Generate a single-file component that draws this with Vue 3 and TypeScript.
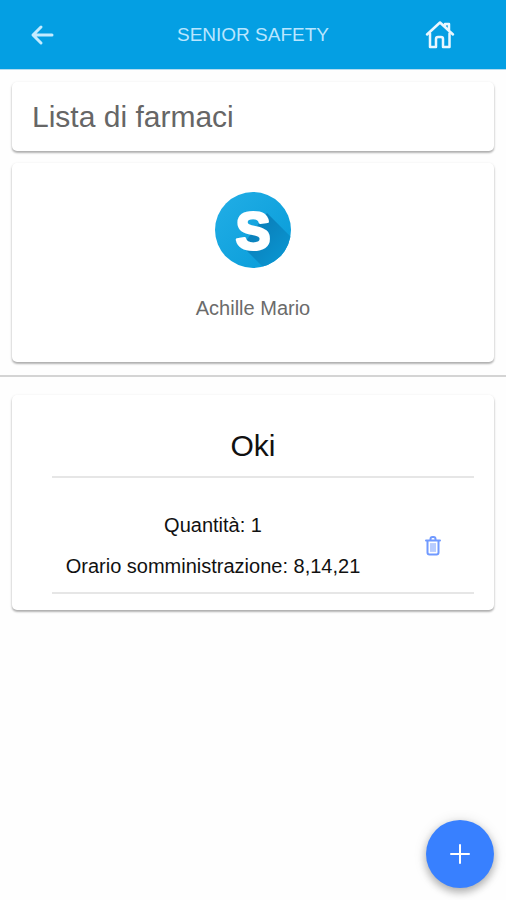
<script setup lang="ts">
interface Medicine {
  id: number
  name: string
  quantity: number
  hours: number[]
}

const patient = 'Achille Mario'
const medicines: Medicine[] = [{ id: 1, name: 'Oki', quantity: 1, hours: [8, 14, 21] }]
</script>

<template>
  <div class="page">
    <header class="toolbar">
      <button class="icon-button" type="button" aria-label="Indietro">
        <svg class="icon-back" viewBox="0 0 24 24" aria-hidden="true">
          <path d="M11 4 3 12l8 8M4 12h18" />
        </svg>
      </button>
      <h1 class="brand">SENIOR SAFETY</h1>
      <a class="icon-button" href="#" aria-label="Home">
        <svg class="icon-home" viewBox="0 0 30 30" aria-hidden="true">
          <path d="M5 13.500V27h6v-8q0-2 2-2h3q2 0 2 2v8h6.500V13.500" />
          <path d="M2 14.500 15 2.500l13 12M20 6.500V4h4v6.500" />
        </svg>
      </a>
    </header>

    <main>
      <section class="card title-card">
        <h2>Lista di farmaci</h2>
      </section>

      <section class="card profile">
        <svg class="logo" viewBox="0 0 78 78" aria-hidden="true">
          <defs>
            <linearGradient id="disc" x1="0" y1="0" x2="1" y2="1">
              <stop offset="0" stop-color="#22aee6" />
              <stop offset="1" stop-color="#079bd8" />
            </linearGradient>
            <linearGradient id="shade" x1="0" y1="0" x2="1" y2="1">
              <stop offset="0.300" stop-color="#0a82bd" />
              <stop offset="0.850" stop-color="#0a9ad6" />
            </linearGradient>
            <clipPath id="round"><circle cx="39" cy="39" r="38" /></clipPath>
          </defs>
          <circle cx="39" cy="39" r="38" fill="url(#disc)" />
          <path d="M53 22 85 54 65 85 50 77 28 55Z" fill="url(#shade)" clip-path="url(#round)" />
          <text x="39" y="58" text-anchor="middle">S</text>
        </svg>
        <p>{{ patient }}</p>
      </section>

      <hr class="divider" />

      <article v-for="item in medicines" :key="item.id" class="card medicine">
        <h3>{{ item.name }}</h3>
        <div class="details">
          <div class="dosage">
            <p>Quantità: {{ item.quantity }}</p>
            <p>Orario somministrazione: {{ item.hours.join(',') }}</p>
          </div>
          <button class="icon-button" type="button" :aria-label="`Elimina ${item.name}`">
            <svg class="icon-trash" viewBox="0 0 16 20" aria-hidden="true">
              <path class="bin" d="M1 4.500h14M5.500 4V3q0-2 2-2h1q2 0 2 2v1M2.500 5v11.500q0 2 2 2h7q2 0 2-2V5" />
              <path d="M6 7.500v8M8 7.500v8M10 7.500v8" />
            </svg>
          </button>
        </div>
      </article>
    </main>

    <button class="fab" type="button" aria-label="Aggiungi farmaco">
      <svg viewBox="0 0 20 20" aria-hidden="true"><path d="M10 1v18M1 10h18" /></svg>
    </button>
  </div>
</template>

<style>
body {
  margin: 0;
  background: #fefefe;
}
</style>

<style scoped>
.page {
  min-height: 100vh;
  font-family: "Liberation Sans", Arial, sans-serif;
  font-size: 20px;
  line-height: 24px;
  color: #111;
}

h1,
h2,
h3,
p {
  margin: 0;
  font-weight: 400;
}

svg {
  display: block;
  fill: none;
  stroke: currentColor;
  stroke-linecap: round;
  stroke-linejoin: round;
}

.icon-button {
  display: flex;
  align-items: center;
  justify-content: center;
  padding: 0;
  border: 0;
  background: none;
  color: inherit;
  cursor: pointer;
}

.toolbar {
  display: grid;
  grid-template-columns: 84px 1fr 84px;
  align-items: center;
  height: 69px;
  padding-right: 24px;
  background: #049fe3;
  color: #e9f7ff;
  border-bottom: 1px solid #b5dcef;
}

.toolbar .icon-button {
  height: 48px;
}

.brand {
  padding-left: 24px;
  font-size: 19px;
  text-align: center;
  color: #b9e6ff;
}

.icon-back {
  width: 24px;
  height: 24px;
  stroke: #c4ebff;
  stroke-width: 3;
}

.icon-home {
  width: 30px;
  height: 30px;
  stroke-width: 2.500;
}

main {
  display: flex;
  flex-direction: column;
  gap: 12px;
  padding: 12px 0;
}

.card {
  margin: 0 12px;
  border-radius: 5px;
  background: #fff;
  box-shadow: 0 2px 2px rgba(0, 0, 0, 0.24), 0 1px 3px rgba(0, 0, 0, 0.14);
}

.title-card {
  padding: 18px 20px;
}

h2,
h3 {
  font-size: 30px;
  line-height: 33px;
}

h2 {
  color: #666;
}

.profile {
  display: flex;
  flex-direction: column;
  align-items: center;
  gap: 27px;
  padding: 28px 20px 42px;
  color: #6b6b6b;
}

.logo {
  width: 78px;
  height: 78px;
  stroke: none;
}

.logo text {
  fill: #fff;
  stroke: #fff;
  stroke-width: 3px;
  font-size: 52px;
  font-weight: 700;
}

.divider {
  width: 100%;
  height: 2px;
  margin: 1px 0 6px;
  border: 0;
  background: #d4d4d4;
}

.medicine {
  padding: 34px 20px 16px 40px;
}

.medicine h3 {
  margin-left: -20px;
  text-align: center;
}

.details {
  display: grid;
  grid-template-columns: 1fr 82px;
  gap: 18px;
  align-items: center;
  margin-top: 14px;
  padding: 35px 0 14px;
  border-top: 2px solid #e6e6e6;
  border-bottom: 2px solid #e6e6e6;
}

.dosage {
  display: flex;
  flex-direction: column;
  gap: 17px;
  text-align: center;
}

.icon-trash {
  width: 16px;
  height: 20px;
  color: #719aff;
}

.icon-trash .bin {
  stroke-width: 2;
}

.fab {
  position: fixed;
  right: 12px;
  bottom: 12px;
  display: flex;
  align-items: center;
  justify-content: center;
  width: 68px;
  height: 68px;
  padding: 0;
  border: 0;
  border-radius: 50%;
  background: #3880ff;
  color: #fff;
  box-shadow: 0 4px 8px rgba(0, 0, 0, 0.28), 0 1px 14px rgba(0, 0, 0, 0.12);
  cursor: pointer;
}

.fab svg {
  width: 20px;
  height: 20px;
  stroke-width: 2;
}
</style>
